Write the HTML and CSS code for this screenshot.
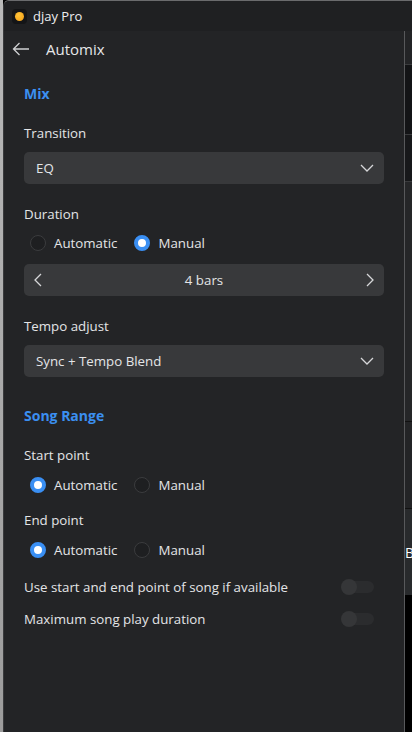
FILE: index.html
```html
<!DOCTYPE html>
<html lang="en">
<head>
  <meta charset="UTF-8">
  <meta name="viewport" content="width=device-width, initial-scale=1.0">
  <title>djay Pro</title>
  <link rel="stylesheet" href="styles.css">
</head>
<body>
  <div class="screen">
    <div class="edge"></div>
    <div class="window">
      <div class="titlebar">
        <span class="app-icon"><span class="app-dot"></span></span>
        <span class="app-name">djay Pro</span>
      </div>
      <div class="frame">
        <div class="panel">
          <div class="header">
            <svg class="back" width="18" height="14" viewBox="0 0 18 14">
              <path d="M17 7H1.5M7.5 1L1.5 7l6 6" fill="none" stroke="#cfd0d2" stroke-width="1.3"/>
            </svg>
            <span class="header-title">Automix</span>
          </div>

          <div class="content">
            <h2 class="section">Mix</h2>

            <div class="label first">Transition</div>
            <div class="select">
              <span>EQ</span>
              <svg class="chev" width="14" height="8" viewBox="0 0 14 8"><path d="M1 1l6 6 6-6" fill="none" stroke="#d6d7d9" stroke-width="1.3"/></svg>
            </div>

            <div class="label">Duration</div>
            <div class="radios">
              <span class="radio"><i class="dot"></i>Automatic</span>
              <span class="radio on"><i class="dot"></i>Manual</span>
            </div>
            <div class="stepper">
              <svg width="8" height="14" viewBox="0 0 8 14"><path d="M7 1L1 7l6 6" fill="none" stroke="#d6d7d9" stroke-width="1.3"/></svg>
              <span>4 bars</span>
              <svg width="8" height="14" viewBox="0 0 8 14"><path d="M1 1l6 6-6 6" fill="none" stroke="#d6d7d9" stroke-width="1.3"/></svg>
            </div>

            <div class="label">Tempo adjust</div>
            <div class="select">
              <span>Sync + Tempo Blend</span>
              <svg class="chev" width="14" height="8" viewBox="0 0 14 8"><path d="M1 1l6 6 6-6" fill="none" stroke="#d6d7d9" stroke-width="1.3"/></svg>
            </div>

            <h2 class="section range">Song Range</h2>

            <div class="label start">Start point</div>
            <div class="radios">
              <span class="radio on"><i class="dot"></i>Automatic</span>
              <span class="radio"><i class="dot"></i>Manual</span>
            </div>

            <div class="label end">End point</div>
            <div class="radios">
              <span class="radio on"><i class="dot"></i>Automatic</span>
              <span class="radio"><i class="dot"></i>Manual</span>
            </div>

            <div class="toggle-row first-toggle">
              <span>Use start and end point of song if available</span>
              <span class="toggle"><i></i></span>
            </div>
            <div class="toggle-row">
              <span>Maximum song play duration</span>
              <span class="toggle"><i></i></span>
            </div>
          </div>
        </div>

        <!-- strip of the main deck peeking out behind the panel -->
        <div class="behind">
          <div class="b1"></div>
          <div class="b2"></div>
          <div class="b3"></div>
          <div class="b4"></div>
          <div class="b5"></div>
          <div class="b6"><span>B</span></div>
          <div class="b7"></div>
        </div>
      </div>
    </div>
  </div>
</body>
</html>
```

FILE: styles.css
```css
* {
  box-sizing: border-box;
}
html, body {
  margin: 0;
  padding: 0;
  height: 100%;
  background: #000;
}
body {
  font-family: "Open Sans", "Noto Sans", sans-serif;
  font-size: 13.3px;
  color: #e4e5e7;
  overflow: hidden;
}
.screen {
  display: flex;
  height: 732px;
  width: 412px;
}
.edge {
  width: 3px;
  background: linear-gradient(to bottom, #b9b9b9, #9c9c9c);
  flex-shrink: 0;
}
.window {
  flex: 1;
  display: flex;
  flex-direction: column;
  background: #232426;
  border-left: 1px solid #3a3b3d;
  border-top: 1px solid #6a6b6d;
  border-top-left-radius: 6px;
  overflow: hidden;
}
.titlebar {
  height: 30px;
  background: #1f2022;
  display: flex;
  align-items: center;
  padding-left: 8px;
  flex-shrink: 0;
}
.app-icon {
  width: 15px;
  height: 15px;
  border-radius: 4px;
  background: #141517;
  display: flex;
  align-items: center;
  justify-content: center;
  margin-right: 6px;
}
.app-dot {
  width: 9px;
  height: 9px;
  border-radius: 50%;
  background: radial-gradient(circle at 40% 35%, #ffc43a, #f39c12);
}
.app-name {
  font-size: 13px;
  color: #eeeeef;
}
.frame {
  flex: 1;
  display: flex;
}
.panel {
  width: 401px;
  flex-shrink: 0;
  border-right: 1px solid #58595b;
}
.header {
  height: 35px;
  display: flex;
  align-items: center;
  padding-left: 8px;
}
.back {
  margin-right: 16px;
}
.header-title {
  font-size: 15px;
  color: #e6e7e9;
}
.content {
  padding: 18px 20px 0 20px;
}
.section {
  margin: 0;
  font-size: 14px;
  font-weight: 700;
  line-height: 20px;
  color: #3b8ff0;
}
.section.range {
  margin-top: 29px;
}
.label {
  line-height: 20px;
  margin-top: 20px;
  margin-bottom: 9px;
}
.label.first {
  margin-top: 19px;
}
.label.start {
  margin-top: 19px;
  margin-bottom: 10px;
}
.label.end {
  margin-top: 15px;
  margin-bottom: 10px;
}
.select, .stepper {
  height: 32px;
  background: #38393b;
  border-radius: 5px;
  display: flex;
  align-items: center;
  justify-content: space-between;
  padding: 0 10px 0 12px;
}
.stepper {
  margin-top: 11px;
  padding: 0 10px;
}
.radios {
  display: flex;
  height: 20px;
  align-items: center;
  padding-left: 6px;
  gap: 17px;
}
.radio {
  display: flex;
  align-items: center;
}
.radio .dot {
  width: 16px;
  height: 16px;
  border-radius: 50%;
  border: 1.5px solid #3b3c3e;
  background: #1e1f21;
  margin-right: 8px;
}
.radio.on .dot {
  border: 4.5px solid #3a8ff3;
  background: #fff;
}
.toggle-row {
  display: flex;
  justify-content: space-between;
  align-items: center;
  height: 20px;
  margin-top: 12px;
  padding-right: 10px;
}
.toggle-row.first-toggle {
  margin-top: 17px;
}
.toggle {
  position: relative;
  width: 32px;
  height: 12px;
  border-radius: 6px;
  background: #2b2c2e;
}
.toggle i {
  position: absolute;
  left: -1px;
  top: -2px;
  width: 16px;
  height: 16px;
  border-radius: 50%;
  background: #353638;
}
.behind {
  flex: 1;
  display: flex;
  flex-direction: column;
}
.b1 { height: 34px; background: #232426; border-bottom: 1px solid #3a3b3d; }
.b2 { height: 70px; background: #131416; border-bottom: 1px solid #3a3b3d; }
.b3 { height: 47px; background: #17181a; border-bottom: 1px solid #3a3b3d; }
.b4 { height: 240px; background: #252628; border-bottom: 1px solid #111; }
.b5 { height: 87px; background: #232426; border-bottom: 1px solid #111; }
.b6 {
  height: 86px;
  background: #282a2c;
  display: flex;
  align-items: center;
  font-size: 14px;
  color: #fff;
}
.b7 { flex: 1; background: #000; }
```
